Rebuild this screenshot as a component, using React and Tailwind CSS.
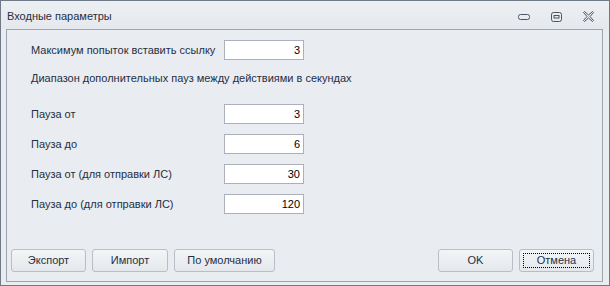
import React from 'react'

const font = { fontFamily: '"Liberation Sans", Arial, sans-serif' }

function Field({ label, value }) {
  return (
    <div className="flex items-center h-[20px]">
      <div className="w-[193px] whitespace-nowrap text-[11px] text-[#1f2f45]">{label}</div>
      <div className="w-[80px] h-[20px] border border-[#aab1bc] bg-white text-right pr-[3px] text-[11px] leading-[18px] text-black">
        {value}
      </div>
    </div>
  )
}

function Btn({ children, w, focus }) {
  return (
    <div
      className={`h-[23px] ${w} rounded-[3px] border border-[#b9bec6] bg-gradient-to-b from-[#f3f5f7] to-[#e4e8ec] flex items-center justify-center text-[11px] text-[#1f2f45] relative`}
    >
      {focus && <div className="absolute inset-[3px] border border-dotted border-black" />}
      <span className="relative">{children}</span>
    </div>
  )
}

export default function App() {
  return (
    <div style={font} className="w-[610px] h-[286px] border border-[#6f7a89] bg-[#e9ecf0] flex flex-col">
      {/* Title bar */}
      <div className="h-[28px] flex items-center pl-[6px] bg-gradient-to-b from-[#edf0f3] to-[#e5e8ec]">
        <div className="text-[11px] text-[#1f2f45] flex-1 pt-[3px]">Входные параметры</div>
        <div className="flex items-center gap-[21px] pr-[15px] pt-[3px]">
          <svg width="12" height="6" viewBox="0 0 12 6">
            <rect x="0.5" y="0.5" width="11" height="5" rx="2" fill="none" stroke="#4a5566" />
          </svg>
          <svg width="11" height="10" viewBox="0 0 11 10">
            <rect x="0.5" y="0.5" width="10" height="9" rx="2" fill="none" stroke="#4a5566" />
            <rect x="3" y="3.5" width="5" height="2.5" fill="none" stroke="#4a5566" />
          </svg>
          <svg width="11" height="11" viewBox="0 0 11 11">
            <path
              d="M0.5 1.5 L1.5 0.5 L5.5 4 L9.5 0.5 L10.5 1.5 L7 5.5 L10.5 9.5 L9.5 10.5 L5.5 7 L1.5 10.5 L0.5 9.5 L4 5.5 Z"
              fill="none"
              stroke="#4a5566"
              strokeLinejoin="round"
            />
          </svg>
        </div>
      </div>

      {/* Content panel */}
      <div className="ml-[5px] mr-[6px] h-[253px] border border-[#9ea4ac] flex flex-col">
        <div className="pl-[24px] pt-[10px] flex flex-col">
          <Field label="Максимум попыток вставить ссылку" value="3" />
          <div className="mt-[10px] h-[16px] leading-[16px] whitespace-nowrap text-[11px] text-[#1f2f45]">
            Диапазон дополнительных пауз между действиями в секундах
          </div>
          <div className="mt-[18px] flex flex-col gap-[10px]">
            <Field label="Пауза от" value="3" />
            <Field label="Пауза до" value="6" />
            <Field label="Пауза от (для отправки ЛС)" value="30" />
            <Field label="Пауза до (для отправки ЛС)" value="120" />
          </div>
        </div>
        <div className="mt-auto mb-[9px] px-[4px] flex items-center">
          <div className="flex gap-[6px]">
            <Btn w="w-[75px]">Экспорт</Btn>
            <Btn w="w-[76px]">Импорт</Btn>
            <Btn w="w-[101px]">По умолчанию</Btn>
          </div>
          <div className="ml-auto flex gap-[6px] pr-[4px]">
            <Btn w="w-[75px]">OK</Btn>
            <Btn w="w-[75px]" focus>Отмена</Btn>
          </div>
        </div>
      </div>
    </div>
  )
}
